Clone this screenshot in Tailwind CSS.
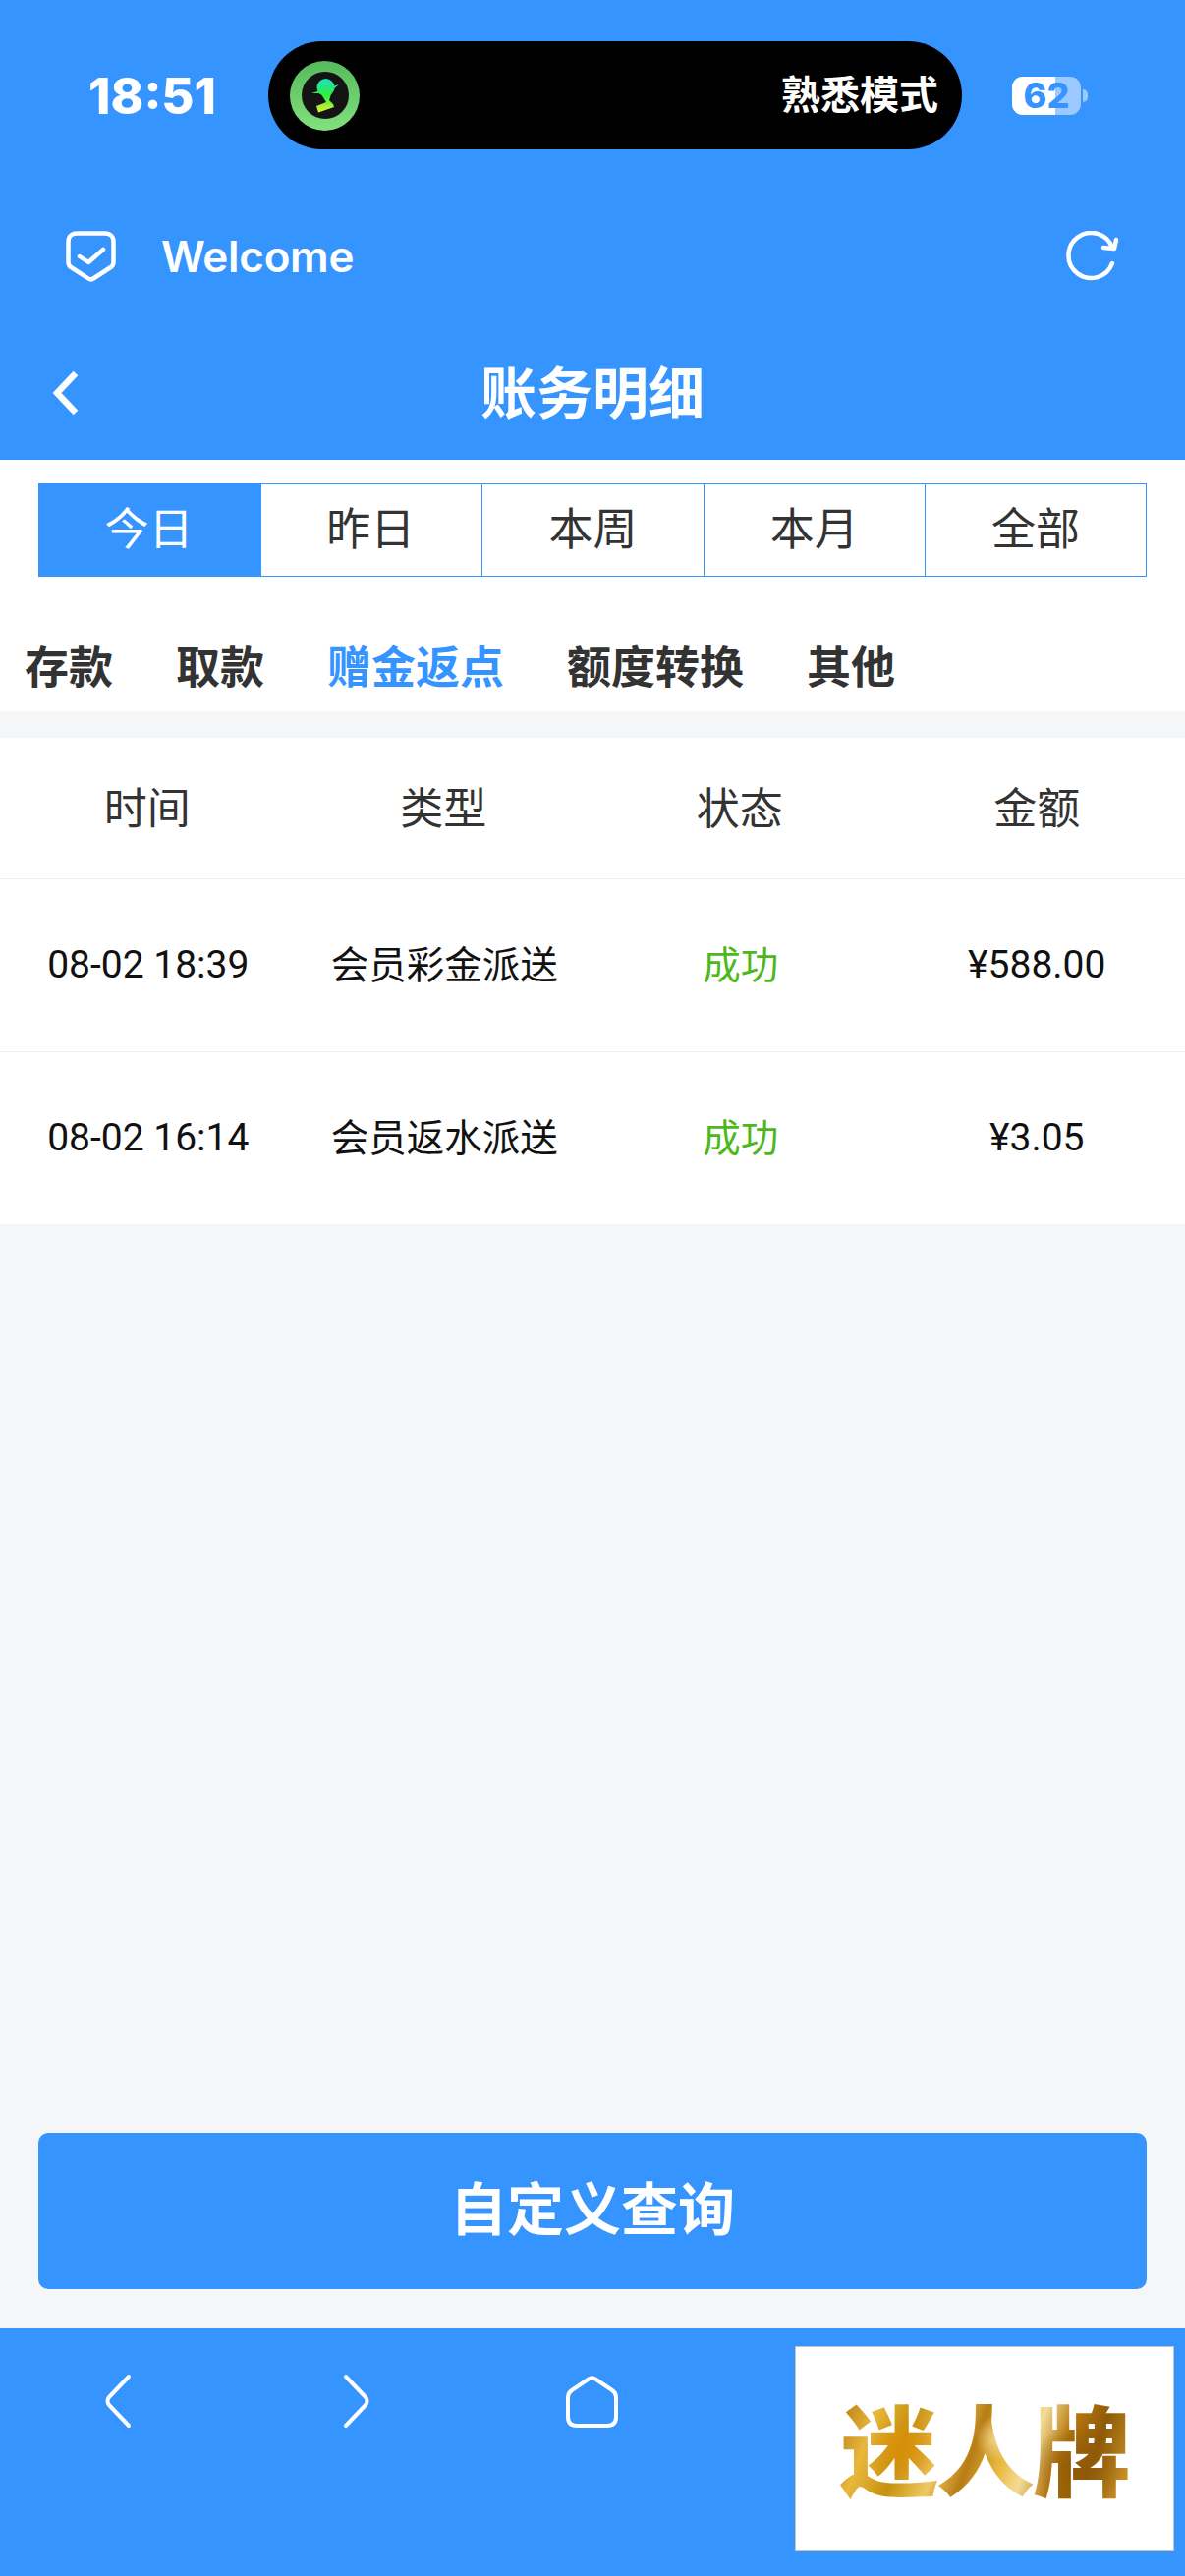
<!DOCTYPE html>
<html lang="zh-CN">
<head>
    <meta charset="UTF-8">
    <meta name="viewport" content="width=device-width, initial-scale=1.0">
    <title>账务明细</title>
    <script src="https://cdn.jsdelivr.net/npm/@tailwindcss/browser@4"></script>
</head>
<body class="bg-[#f5f6f8] font-['Inter','Noto_Sans_CJK_SC',sans-serif]">
<div class="w-[1206px] h-[2622px] flex flex-col overflow-hidden">

    <!-- Blue header -->
    <header class="bg-[#3694ff] text-white h-[468px] shrink-0 flex flex-col">
        <!-- Status bar -->
        <div class="h-[152px] pt-[42px] pl-[90px] flex items-start">
            <span class="w-[183px] h-[110px] flex items-center text-[51px] font-extrabold leading-none">18:51</span>
            <div class="w-[706px] h-[110px] bg-black rounded-[55px] flex items-center justify-between pl-[22px] pr-[24px]">
                <div class="w-[71px] h-[71px] rounded-full bg-gradient-to-b from-[#56bb5c] to-[#82e07f] flex items-center justify-center">
                    <div class="w-[48px] h-[48px] rounded-full bg-[#141414] flex items-center justify-center">
                        <svg width="28" height="35" viewBox="0 0 28 35">
                            <defs>
                                <linearGradient id="logoGrad" gradientUnits="userSpaceOnUse" x1="0" y1="0" x2="0" y2="35">
                                    <stop offset="0" stop-color="#20e0c0"/>
                                    <stop offset="0.5" stop-color="#2cf040"/>
                                    <stop offset="1" stop-color="#f0f030"/>
                                </linearGradient>
                            </defs>
                            <circle cx="14.500" cy="9" r="9" fill="url(#logoGrad)"/>
                            <path d="M0 15 L28 6 L20 13 L12 15 Z" fill="url(#logoGrad)"/>
                            <path d="M10 16 H20 L18 22 L22 26 L23 29 L7 34.500 L5 28 L15 24 Z" fill="url(#logoGrad)"/>
                        </svg>
                    </div>
                </div>
                <span class="text-[40px] font-bold leading-none">熟悉模式</span>
            </div>
            <div class="ml-[51px] h-[110px] flex items-center">
                <div class="relative w-[70px] h-[39px] rounded-[11px] bg-[#9cc9ff]">
                    <div class="w-[44px] h-[39px] bg-white rounded-l-[11px]"></div>
                    <span class="absolute inset-0 flex items-center justify-center text-[36px] font-extrabold leading-none text-[#3694ff]">62</span>
                </div>
                <div class="ml-[2px] w-[5px] h-[13px] bg-[#9cc9ff] rounded-r-full"></div>
            </div>
        </div>

        <!-- Welcome row -->
        <div class="mt-[53px] h-[112px] flex items-center justify-between pl-[67px] pr-[66px]">
            <div class="flex items-center gap-[46px]">
                <svg width="51" height="52" viewBox="0 0 51 52" fill="none" stroke="white" stroke-width="4.500" stroke-linecap="round" stroke-linejoin="round">
                    <path d="M11 2.500 H40 C45 2.500 48.500 6 48.500 11 V32 C48.500 35 47 36.500 45 37.500 L28 48.500 C26.500 49.500 24.500 49.500 23 48.500 L6 37.500 C4 36.500 2.500 35 2.500 32 V11 C2.500 6 6 2.500 11 2.500 Z"/>
                    <path d="M14 26 L23 32 L38 19"/>
                </svg>
                <span class="text-[44px] font-semibold leading-none tracking-[-0.3px]">Welcome</span>
            </div>
            <svg width="56" height="52" viewBox="0 0 56 52" fill="none" stroke="white" stroke-width="4.500" stroke-linecap="round" stroke-linejoin="round">
                <path d="M48 33 A23 23 0 1 1 48 17"/>
                <path d="M39 17 L50 18 L52 9"/>
            </svg>
        </div>

        <!-- Title row -->
        <div class="relative flex-1 flex items-center justify-center pt-[15px]">
            <svg class="absolute left-[50px] top-[58px]" width="32" height="50" viewBox="0 0 32 50" fill="none" stroke="white" stroke-width="6.500" stroke-linejoin="miter">
                <path d="M27 5 L8 25 L27 45"/>
            </svg>
            <h1 class="text-[57px] font-bold leading-none">账务明细</h1>
        </div>
    </header>

    <!-- Filters -->
    <section class="bg-white h-[256px] shrink-0 pt-[24px]">
        <div class="mx-[39px] h-[95px] grid grid-cols-5 border border-[#3694ff] text-[45px] leading-none text-[#333]">
            <div class="bg-[#3694ff] text-white flex items-center justify-center pb-[2px] pr-[2px]">今日</div>
            <div class="border-l border-[#3694ff] flex items-center justify-center pb-[2px] pr-[2px]">昨日</div>
            <div class="border-l border-[#3694ff] flex items-center justify-center pb-[2px]">本周</div>
            <div class="border-l border-[#3694ff] flex items-center justify-center pb-[2px]">本月</div>
            <div class="border-l border-[#3694ff] flex items-center justify-center pb-[2px]">全部</div>
        </div>
        <div class="mt-[70px] pl-[25px] flex gap-[64px] text-[45px] font-bold leading-none text-[#333]">
            <span>存款</span>
            <span>取款</span>
            <span class="text-[#3694ff]">赠金返点</span>
            <span>额度转换</span>
            <span>其他</span>
        </div>
    </section>

    <!-- Records table -->
    <section class="mt-[27px] bg-white shrink-0">
        <div class="h-[144px] grid grid-cols-4 items-center text-center text-[44px] text-[#333] leading-none border-b border-[#eeeeee]">
            <span class="pr-[2px]">时间</span>
            <span class="pr-[2px]">类型</span>
            <span class="pr-[2px]">状态</span>
            <span>金额</span>
        </div>
        <div class="h-[176px] grid grid-cols-4 items-center text-center text-[38.5px] text-[#111] leading-none border-b border-[#eeeeee]">
            <span class="font-['Roboto'] text-[39px]">08-02 18:39</span>
            <span>会员彩金派送</span>
            <span class="text-[#4cb81a]">成功</span>
            <span class="font-['Roboto'] text-[39px]">¥588.00</span>
        </div>
        <div class="h-[175px] grid grid-cols-4 items-center text-center text-[38.5px] text-[#111] leading-none">
            <span class="font-['Roboto'] text-[39px]">08-02 16:14</span>
            <span>会员返水派送</span>
            <span class="text-[#4cb81a]">成功</span>
            <span class="font-['Roboto'] text-[39px]">¥3.05</span>
        </div>
    </section>

    <!-- Query button -->
    <div class="flex-1 flex flex-col justify-end px-[39px] pb-[40px]">
        <button class="w-full h-[159px] pb-[4px] rounded-[10px] bg-[#3694ff] text-white text-[58px] font-bold leading-none">自定义查询</button>
    </div>

    <!-- Bottom bar -->
    <footer class="bg-[#3694ff] h-[252px] shrink-0 relative">
        <div class="flex items-start pt-[46px] pl-[106px]">
            <svg width="28" height="56" viewBox="0 0 28 56" fill="none" stroke="white" stroke-width="4" stroke-linecap="round" stroke-linejoin="round">
                <path d="M25 3 L5 24 C3 26 3 30 5 32 L25 53"/>
            </svg>
            <svg class="ml-[215px]" width="28" height="56" viewBox="0 0 28 56" fill="none" stroke="white" stroke-width="4" stroke-linecap="round" stroke-linejoin="round">
                <path d="M3 3 L23 24 C25 26 25 30 23 32 L3 53"/>
            </svg>
            <svg class="ml-[199px] mt-[2px]" width="53" height="53" viewBox="0 0 53 53" fill="none" stroke="white" stroke-width="4" stroke-linecap="round" stroke-linejoin="round">
                <path d="M23 3.500 C25.500 1.800 27.500 1.800 30 3.500 L47 15 C50 17 51 19 51 22 V42 C51 48 48 51 42 51 H11 C5 51 2 48 2 42 V22 C2 19 3 17 6 15 Z"/>
            </svg>
        </div>
        <div class="absolute left-[809px] top-[18px] w-[386px] h-[209px] bg-white border border-[#c4c4c4] flex items-center justify-center pt-[8px]">
            <span class="text-[100px] font-black leading-none tracking-[-2px] text-transparent bg-clip-text bg-[radial-gradient(circle_at_22%_45%,#d98f08_0,transparent_16%),radial-gradient(circle_at_55%_35%,#f5dc96_0,transparent_14%),radial-gradient(circle_at_82%_65%,#8f5a08_0,transparent_18%),linear-gradient(110deg,#b87a10,#e8b83c_12%,#c8900f_24%,#efc862_36%,#b87c14_46%,#e9b93c_56%,#f3dc98_64%,#b5760c_74%,#8f5a08_84%,#d9a030)]">迷人牌</span>
        </div>
    </footer>
</div>
</body>
</html>
